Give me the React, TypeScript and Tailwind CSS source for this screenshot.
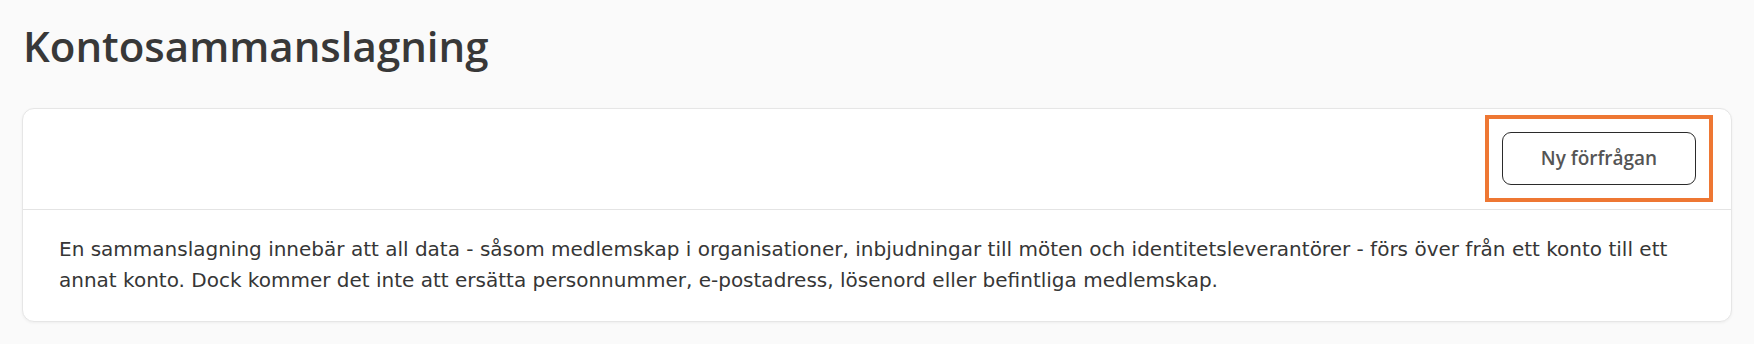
import React from 'react';

const App = () => {
  return (
    <div className="min-h-screen w-full bg-[#fafafa] px-[22px] pt-[21px]">
      <h1 className="pl-[1px] font-['Open_Sans',sans-serif] text-[42px] leading-[50px] font-semibold text-[#383838]">
        Kontosammanslagning
      </h1>

      <div className="mt-[37px] rounded-[12px] border border-[#e6e6e6] bg-white shadow-[0_1px_3px_rgba(0,0,0,0.05)]">
        {/* header with action */}
        <div className="flex justify-end border-b border-[#e4e4e4] pt-[6px] pr-[18px] pb-[7px]">
          <div className="border-4 border-[#ee7733] p-[13px]">
            <button className="h-[53px] w-[194px] rounded-[9px] border border-[#2b2b2b] bg-white font-['Open_Sans',sans-serif] text-[19px] font-semibold text-[#555555]">
              Ny förfrågan
            </button>
          </div>
        </div>

        <p className="px-[36px] pt-[24px] pb-[25px] font-['DejaVu_Sans',sans-serif] text-[20px] leading-[31px] text-[#363636]">
          En sammanslagning innebär att all data - såsom medlemskap i organisationer, inbjudningar till möten och
          identitetsleverantörer - förs över från ett konto till ett annat konto. Dock kommer det inte att ersätta
          personnummer, e-postadress, lösenord eller befintliga medlemskap.
        </p>
      </div>
    </div>
  );
};

export default App;
